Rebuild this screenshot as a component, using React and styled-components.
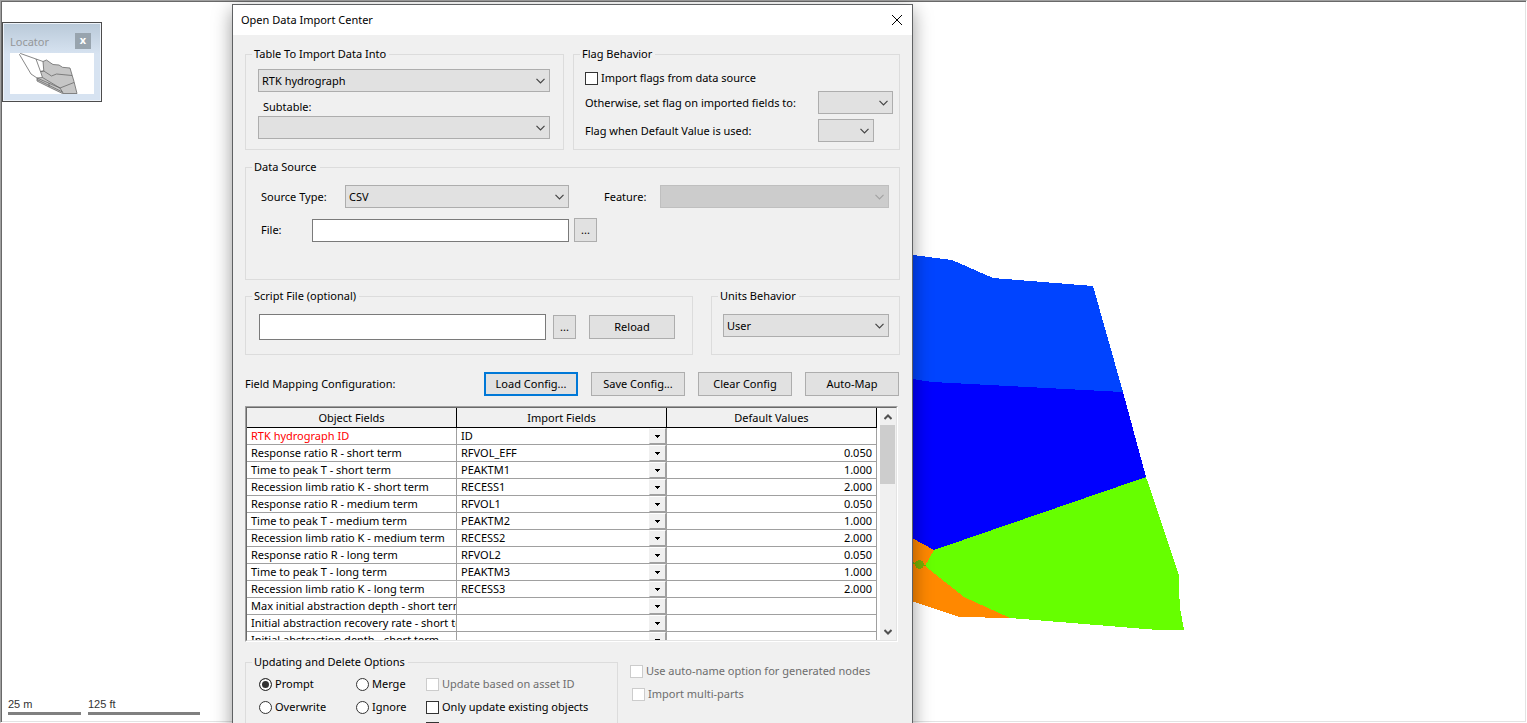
import React, { useState } from "react";
import styled, { createGlobalStyle, css } from "styled-components";

const UI_FONT = '"Noto Sans", "Open Sans", sans-serif';

const GlobalStyle = createGlobalStyle`
  *, *::before, *::after { box-sizing: border-box; }
  html, body { margin: 0; height: 100%; overflow: hidden; background: #fff; }
  body, button, input, select { font-family: ${UI_FONT}; font-size: 11px; line-height: 16px; color: #000; }
`;

/* ---------- workspace ---------- */

const Workspace = styled.div`
  position: relative;
  height: 100vh;
  overflow: hidden;
  background: #fff;
`;

const MapPane = styled.main`
  height: 100%;
  display: flex;
  flex-direction: column;
  justify-content: space-between;
  align-items: flex-start;
  padding: 21px 0 1px 1px;
  border: 1px solid;
  border-color: #a0a0a0 #fff #fff #a0a0a0;
  box-shadow: inset 1px 1px #696969, inset -1px -1px #e3e3e3;
`;

const MapDrawing = styled.svg`
  position: absolute;
  left: 0;
  top: 0;
  width: 1200px;
  height: 640px;
`;

const LocatorPanel = styled.section`
  width: 100px;
  padding: 9px 6px 7px;
  border: 1px solid #4c4c4c;
  box-shadow: inset 0 0 0 1px #eef3f9;
  background: linear-gradient(#b9c9d8, #d7e3f1 40%);
`;

const LocatorHeader = styled.header`
  display: flex;
  align-items: flex-start;
  justify-content: space-between;
  padding: 1px 4px 3px 1px;
  color: #959799;
`;

const LocatorTitle = styled.h2`
  margin: 1px 0 0;
  font-size: 11px;
  line-height: 16px;
  font-weight: 400;
`;

const LocatorClose = styled.button`
  width: 16px;
  height: 16px;
  padding: 0 0 2px;
  border: 0;
  background: #98a4ae;
  color: #fff;
  font-size: 11px;
  font-weight: 700;
  line-height: 12px;
`;

const LocatorMap = styled.svg`
  display: block;
  width: 84px;
  height: 41px;
  margin-left: 1px;
  background: #fff;
`;

const ScaleBar = styled.footer`
  display: flex;
  gap: 7px;
  padding: 0 0 6px 6px;
`;

const ScaleItem = styled.div`
  width: ${(p) => p.$width}px;
  border-bottom: 3px solid #808080;
  font: 11px/16px "Liberation Sans", Arial, sans-serif;
  color: #333;
`;

/* ---------- dialog ---------- */

const Dialog = styled.section`
  position: absolute;
  left: 232px;
  top: 4px;
  width: 681px;
  min-height: 100vh;
  border: 1px solid #5f6163;
  background: #f0f0f0;
  box-shadow: 0 6px 18px rgba(0, 0, 0, 0.4);
`;

const TitleBar = styled.header`
  display: flex;
  align-items: center;
  justify-content: space-between;
  height: 30px;
  padding: 0 10px 0 8px;
  background: #fff;
`;

const Title = styled.h1`
  margin: 0;
  font-size: 11px;
  line-height: 16px;
  font-weight: 400;
`;

const CloseButton = styled.button`
  display: flex;
  padding: 0;
  border: 0;
  background: none;
`;

const Body = styled.form`
  padding: 11px 12px 0;
`;

const Row = styled.div`
  display: flex;
  align-items: ${(p) => p.$align || "center"};
  gap: ${(p) => p.$gap || 0}px;
  margin-top: ${(p) => p.$top || 0}px;
`;

const Group = styled.fieldset`
  min-width: 0;
  margin: 0;
  padding: ${(p) => p.$pad || "0"};
  border: 1px solid #dcdcdc;
  ${(p) => (p.$width ? css`width: ${p.$width}px;` : css`flex: 1;`)}
`;

const Legend = styled.legend`
  margin-left: ${(p) => p.$indent}px;
  padding: 0 3px 0 2px;
  line-height: 16px;
`;

const Label = styled.label`
  flex: none;
  width: ${(p) => (p.$width ? `${p.$width}px` : "auto")};
  white-space: nowrap;
`;

const SubLabel = styled(Label)`
  display: block;
  padding: 7px 0 1px 5px;
`;

const FeatureLabel = styled(Label)`
  width: 91px;
  padding-left: 35px;
`;

const ComboBox = styled.span`
  display: grid;
  align-items: center;
  height: 23px;
  ${(p) => (p.$width ? css`width: ${p.$width}px;` : css`flex: 1;`)}
`;

const ComboSelect = styled.select`
  grid-area: 1 / 1;
  width: 100%;
  height: 100%;
  padding: 0 20px 0 3px;
  appearance: none;
  border: 1px solid #adadad;
  border-radius: 0;
  background: #e1e1e1;
  outline: 0;
  &:disabled { background: #ccc; border-color: #bfbfbf; opacity: 1; }
`;

const ComboArrow = styled.svg`
  grid-area: 1 / 1;
  justify-self: end;
  width: 9px;
  height: 6px;
  margin-right: 5px;
  pointer-events: none;
  fill: none;
  stroke: ${(p) => (p.$disabled ? "#a3a3a3" : "#444")};
`;

const TextBox = styled.input`
  width: ${(p) => p.$width}px;
  height: ${(p) => p.$height}px;
  padding: 0 4px;
  border: 1px solid #7a7a7a;
  background: #fff;
  outline: 0;
`;

const Button = styled.button`
  width: ${(p) => p.$width}px;
  height: 24px;
  padding: 0;
  border: ${(p) => (p.$default ? "2px solid #0078d7" : "1px solid #adadad")};
  background: #e1e1e1;
  white-space: nowrap;
`;

const FilePicker = styled.div`
  display: flex;
  align-items: flex-end;
  gap: 5px;
`;

const Heading = styled.h2`
  flex: 1;
  margin: 0;
  font-size: 11px;
  line-height: 16px;
  font-weight: 400;
`;

const Buttons = styled.div`
  display: flex;
  gap: 13px;
  padding-right: 1px;
`;

const FlagGrid = styled.div`
  display: grid;
  grid-template-columns: 233px 1fr;
  row-gap: 5px;
  align-items: center;
`;

const Option = styled.label`
  display: flex;
  align-items: center;
  gap: 3px;
  height: 16px;
  white-space: nowrap;
  color: ${(p) => (p.$disabled ? "#6d6d6d" : "#000")};
  margin-left: ${(p) => p.$indent || 0}px;
`;

const FlagOption = styled(Option)`
  grid-column: 1 / -1;
`;

const markBase = css`
  appearance: none;
  flex: none;
  width: 13px;
  height: 13px;
  margin: 0;
  border: 1px solid #333;
  background: #fff;
  &:disabled { border-color: #ccc; }
`;

const Check = styled.input.attrs({ type: "checkbox" })`
  ${markBase}
  &:checked { box-shadow: inset 0 0 0 2px #fff; background: #333; }
`;

const Radio = styled.input.attrs({ type: "radio" })`
  ${markBase}
  border-radius: 50%;
  &:checked { box-shadow: inset 0 0 0 2px #fff; background: #333; }
`;

/* ---------- mapping list ---------- */

const ListFrame = styled.div`
  width: 653px;
  margin-top: 10px;
  border: 1px solid;
  border-color: #a0a0a0 #fff #fff #a0a0a0;
`;

const ListView = styled.div`
  display: flex;
  height: 234px;
  overflow: hidden;
  border: 1px solid;
  border-color: #696969 #e3e3e3 #e3e3e3 #696969;
  background: #fff;
`;

const Table = styled.table`
  flex: none;
  align-self: flex-start;
  width: 630px;
  table-layout: fixed;
  border-collapse: separate;
  border-spacing: 0;
  font-size: 11px;
  line-height: 16px;
`;

const HeadCell = styled.th`
  height: 20px;
  padding: 0;
  border-right: 1px solid #000;
  border-bottom: 1px solid #000;
  background: #f0f0f0;
  font-weight: 400;
`;

const Cell = styled.td`
  height: 17px;
  padding: 0 4px;
  overflow: hidden;
  border-right: 1px solid #a0a0a0;
  border-bottom: 1px solid #a0a0a0;
  white-space: nowrap;
  text-align: ${(p) => p.$align || "left"};
  color: ${(p) => (p.$key ? "#f00" : "#000")};
`;

const PickerCell = styled(Cell)`
  padding: 0;
`;

const Picker = styled.span`
  display: grid;
  height: 16px;
`;

const PickerSelect = styled.select`
  grid-area: 1 / 1;
  width: 100%;
  height: 16px;
  padding: 0 18px 0 4px;
  appearance: none;
  border: 0;
  border-radius: 0;
  background: #fff;
  outline: 0;
`;

const PickerArrow = styled.span`
  grid-area: 1 / 1;
  justify-self: end;
  display: flex;
  align-items: center;
  justify-content: center;
  width: 17px;
  height: 16px;
  border: 1px solid;
  border-color: #fff #a0a0a0 #a0a0a0 #f0f0f0;
  background: #f0f0f0;
  pointer-events: none;
`;

const ScrollBar = styled.div`
  flex: 1;
  display: flex;
  flex-direction: column;
  border-left: 3px solid #fff;
  background: #f0f0f0;
`;

const ScrollButton = styled.button`
  display: flex;
  align-items: center;
  justify-content: center;
  flex: none;
  height: 17px;
  padding: 0;
  border: 0;
  background: none;
`;

const ScrollTrack = styled.div`
  flex: 1;
  padding-right: 1px;
`;

const ScrollThumb = styled.div`
  height: 59px;
  background: #cdcdcd;
`;

const UpdateGrid = styled.div`
  display: grid;
  grid-template-columns: 97px 70px 1fr;
  row-gap: 7px;
`;

const LastOption = styled(Option)`
  grid-column: 3;
  align-items: flex-start;
`;

const SideOptions = styled.div`
  display: grid;
  gap: 7px;
  padding: 9px 0 0 12px;
`;

function Combo({ id, value, width, disabled, label }) {
  return (
    <ComboBox $width={width}>
      <ComboSelect id={id} disabled={disabled} aria-label={label}>
        <option>{value}</option>
      </ComboSelect>
      <ComboArrow $disabled={disabled} viewBox="0 0 9 6" aria-hidden="true">
        <path d="M0.5 0.8 4.5 4.8 8.5 0.8" strokeWidth="1.2" />
      </ComboArrow>
    </ComboBox>
  );
}

const FIELDS = [
  ["RTK hydrograph ID", "ID", ""],
  ["Response ratio R - short term", "RFVOL_EFF", "0.050"],
  ["Time to peak T - short term", "PEAKTM1", "1.000"],
  ["Recession limb ratio K - short term", "RECESS1", "2.000"],
  ["Response ratio R - medium term", "RFVOL1", "0.050"],
  ["Time to peak T - medium term", "PEAKTM2", "1.000"],
  ["Recession limb ratio K - medium term", "RECESS2", "2.000"],
  ["Response ratio R - long term", "RFVOL2", "0.050"],
  ["Time to peak T - long term", "PEAKTM3", "1.000"],
  ["Recession limb ratio K - long term", "RECESS3", "2.000"],
  ["Max initial abstraction depth - short term", "", ""],
  ["Initial abstraction recovery rate - short term", "", ""],
  ["Initial abstraction depth - short term", "", ""],
];

function FieldTable() {
  return (
    <ListFrame>
      <ListView>
        <Table>
          <thead>
            <tr>
              <HeadCell>Object Fields</HeadCell>
              <HeadCell>Import Fields</HeadCell>
              <HeadCell>Default Values</HeadCell>
            </tr>
          </thead>
          <tbody>
            {FIELDS.map(([name, source, value], i) => (
              <tr key={name}>
                <Cell $key={i === 0}>{name}</Cell>
                <PickerCell>
                  <Picker>
                    <PickerSelect aria-label={name}>
                      <option>{source}</option>
                    </PickerSelect>
                    <PickerArrow>
                      <svg width="5" height="3" viewBox="0 0 5 3" shapeRendering="crispEdges" aria-hidden="true">
                        <path d="M0 0H5V1H4V2H3V3H2V2H1V1H0Z" />
                      </svg>
                    </PickerArrow>
                  </Picker>
                </PickerCell>
                <Cell $align="right">{value}</Cell>
              </tr>
            ))}
          </tbody>
        </Table>
        <ScrollBar>
          <ScrollButton type="button" aria-label="Scroll up">
            <svg width="8" height="6" viewBox="0 0 8 6" fill="none" stroke="#505050" strokeWidth="2">
              <path d="M0.5 5 4 1.5 7.5 5" />
            </svg>
          </ScrollButton>
          <ScrollTrack>
            <ScrollThumb />
          </ScrollTrack>
          <ScrollButton type="button" aria-label="Scroll down">
            <svg width="8" height="6" viewBox="0 0 8 6" fill="none" stroke="#505050" strokeWidth="2">
              <path d="M0.5 1 4 4.5 7.5 1" />
            </svg>
          </ScrollButton>
        </ScrollBar>
      </ListView>
    </ListFrame>
  );
}

function Subcatchments() {
  return (
    <MapDrawing viewBox="0 0 1200 640" shapeRendering="crispEdges" aria-hidden="true">
      <path fill="#0044ff" d="M900 254 913 255 952 260 993 278 1093 286 1123 392 932 382 900 378Z" />
      <path fill="#0000ff" d="M900 378 913 379 932 382 1123 392 1146 477 934 550 912 538 900 531Z" />
      <path fill="#ff8800" d="M900 531 912 538 934 550 925 566 964 597 1010 618 959 617 912 601 900 597Z" />
      <path fill="#66ff00" d="M1146 477 1179 575 1179 590 1180 608 1184 630 1158 630 1010 618 964 597 925 566 934 550Z" />
      <path stroke="#66bb00" fill="none" d="M900 558 919 565 926 565" />
      <circle cx="919.5" cy="564.5" r="4.5" fill="#77b300" />
    </MapDrawing>
  );
}

function Locator() {
  return (
    <LocatorPanel>
      <LocatorHeader>
        <LocatorTitle>Locator</LocatorTitle>
        <LocatorClose type="button" aria-label="Close locator">x</LocatorClose>
      </LocatorHeader>
      <LocatorMap viewBox="0 0 84 41" aria-hidden="true">
        <g stroke="#6a6a6a" strokeWidth="0.8" fill="none">
          <path fill="#c6c6c6" d="M33 8.5 36.5 7 40 9.5 43 11.5 49 12 52.5 14.3 60 15 64 28.5 67 40.5H52.5L39 34 27 28V25L32.5 24.5 30.5 18.5 33.8 18Z" />
          <path d="M27 25 21 21 9.5 1.5 10.5 0.5 26 6 33 8.5M26 6 30.5 18.5" />
          <path d="M30.5 18.5 33.8 18 41.5 23 46.5 21 62 22.5M50 35 64 29.5M27 25 50 35 53 40M27 26.5 52.5 39M32.5 24.5 50 35M39 30V34" />
        </g>
      </LocatorMap>
    </LocatorPanel>
  );
}

export default function App() {
  const [mode, setMode] = useState("Prompt");
  const radio = (name) => (
    <Option>
      <Radio name="mode" checked={mode === name} onChange={() => setMode(name)} />
      {name}
    </Option>
  );

  return (
    <>
      <GlobalStyle />
      <Workspace>
        <MapPane>
          <Subcatchments />
          <Locator />
          <ScaleBar>
            <ScaleItem $width={73}>25 m</ScaleItem>
            <ScaleItem $width={112}>125 ft</ScaleItem>
          </ScaleBar>
        </MapPane>

        <Dialog role="dialog" aria-labelledby="dialog-title">
          <TitleBar>
            <Title id="dialog-title">Open Data Import Center</Title>
            <CloseButton type="button" aria-label="Close">
              <svg width="10" height="10" viewBox="0 0 10 10" stroke="#000" aria-hidden="true">
                <path d="M0 0 10 10M10 0 0 10" />
              </svg>
            </CloseButton>
          </TitleBar>

          <Body onSubmit={(e) => e.preventDefault()}>
            <Row $gap={9} $align="stretch">
              <Group $width={319} $pad="7px 13px 10px 12px">
                <Legend $indent={-6}>Table To Import Data Into</Legend>
                <Combo value="RTK hydrograph" label="Table To Import Data Into" />
                <SubLabel htmlFor="subtable">Subtable:</SubLabel>
                <Combo id="subtable" value="" />
              </Group>
              <Group $pad="8px 6px 7px 11px">
                <Legend $indent={-5}>Flag Behavior</Legend>
                <FlagGrid>
                  <FlagOption>
                    <Check />
                    Import flags from data source
                  </FlagOption>
                  <Label htmlFor="flag-set">Otherwise, set flag on imported fields to:</Label>
                  <Combo id="flag-set" value="" width={75} />
                  <Label htmlFor="flag-default">Flag when Default Value is used:</Label>
                  <Combo id="flag-default" value="" width={56} />
                </FlagGrid>
              </Group>
            </Row>

            <Row $top={9}>
              <Group $pad="10px 10px 37px 15px">
                <Legend $indent={-9}>Data Source</Legend>
                <Row>
                  <Label htmlFor="source-type" $width={84}>Source Type:</Label>
                  <Combo id="source-type" value="CSV" width={224} />
                  <FeatureLabel htmlFor="feature">Feature:</FeatureLabel>
                  <Combo id="feature" value="" disabled />
                </Row>
                <Row $top={10}>
                  <Label htmlFor="file" $width={51}>File:</Label>
                  <FilePicker>
                    <TextBox id="file" type="text" $width={257} $height={23} />
                    <Button type="button" $width={23} aria-label="Browse for file">...</Button>
                  </FilePicker>
                </Row>
              </Group>
            </Row>

            <Row $gap={18} $top={8} $align="stretch">
              <Group $width={448} $pad="10px 13px 14px 13px">
                <Legend $indent={-7}>Script File (optional)</Legend>
                <Row $gap={13}>
                  <Row $gap={7}>
                    <TextBox type="text" aria-label="Script file" $width={287} $height={26} />
                    <Button type="button" $width={23} aria-label="Browse for script">...</Button>
                  </Row>
                  <Button type="button" $width={86}>Reload</Button>
                </Row>
              </Group>
              <Group $pad="10px 10px 14px 11px">
                <Legend $indent={-5}>Units Behavior</Legend>
                <Combo value="User" label="Units Behavior" />
              </Group>
            </Row>

            <Row $top={17}>
              <Heading>Field Mapping Configuration:</Heading>
              <Buttons>
                <Button type="button" $width={94} $default>Load Config...</Button>
                <Button type="button" $width={94}>Save Config...</Button>
                <Button type="button" $width={94}>Clear Config</Button>
                <Button type="button" $width={94}>Auto-Map</Button>
              </Buttons>
            </Row>

            <FieldTable />

            <Row $top={12} $align="flex-start">
              <Group $width={373} $pad="6px 8px 14px 13px">
                <Legend $indent={-7}>Updating and Delete Options</Legend>
                <UpdateGrid>
                  {radio("Prompt")}
                  {radio("Merge")}
                  <Option $disabled>
                    <Check disabled />
                    Update based on asset ID
                  </Option>
                  {radio("Overwrite")}
                  {radio("Ignore")}
                  <Option>
                    <Check />
                    Only update existing objects
                  </Option>
                  <LastOption>
                    <Check aria-label="Delete missing objects" />
                  </LastOption>
                </UpdateGrid>
              </Group>
              <SideOptions>
                <Option $disabled>
                  <Check disabled />
                  Use auto-name option for generated nodes
                </Option>
                <Option $disabled $indent={2}>
                  <Check disabled />
                  Import multi-parts
                </Option>
              </SideOptions>
            </Row>
          </Body>
        </Dialog>
      </Workspace>
    </>
  );
}
